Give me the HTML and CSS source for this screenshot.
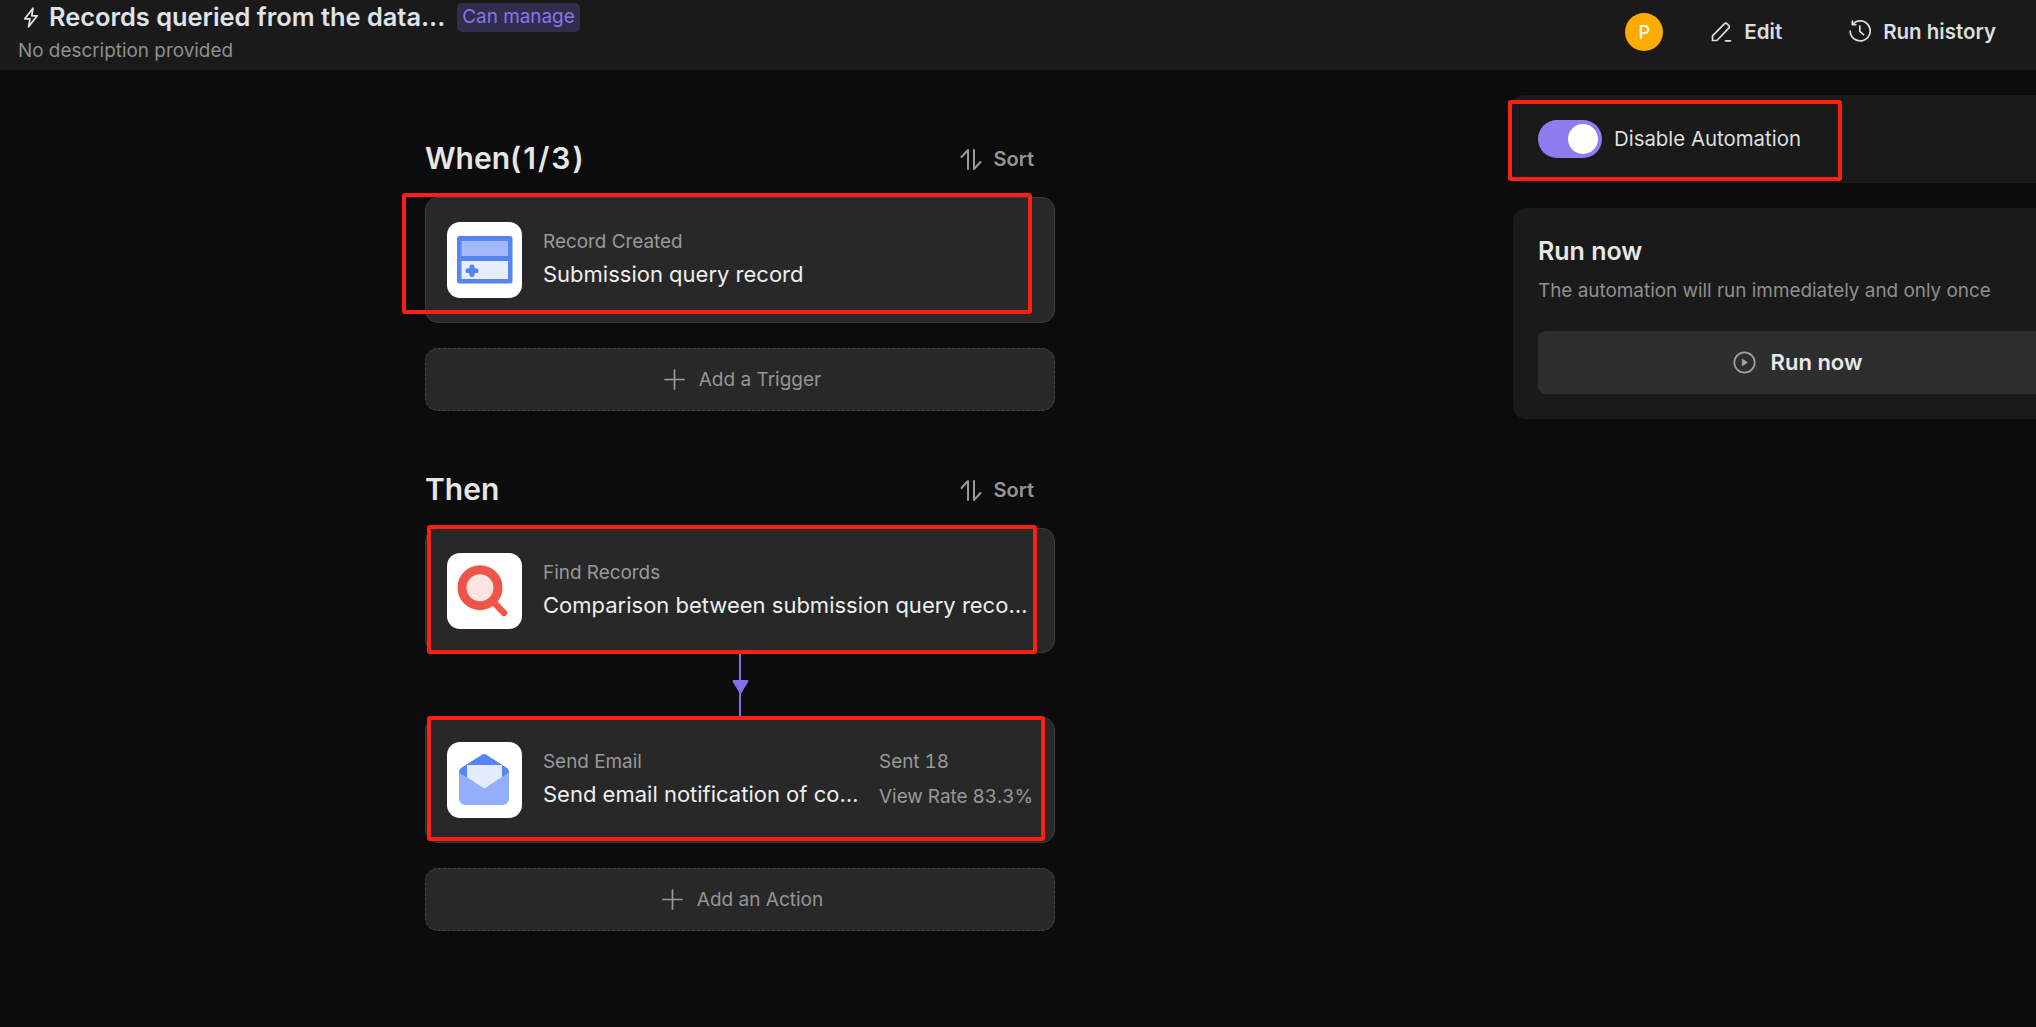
FILE: index.html
```html
<!DOCTYPE html>
<html lang="en">
<head>
<meta charset="utf-8">
<title>Automation</title>
<link rel="stylesheet" href="styles.css">
</head>
<body>
<div class="page">
  <header class="topbar">
    <div class="topbar-left">
      <div class="title-row">
        <svg class="bolt" width="16" height="21" viewBox="0 0 16 21" fill="none"><path d="M10 1.200 1.800 11.800H7L5.600 19.800 14.200 8.800H8.800Z" stroke="#e0e0e0" stroke-width="1.800" stroke-linejoin="round"/></svg>
        <h1 class="title">Records queried from the data...</h1>
        <span class="badge">Can manage</span>
      </div>
      <p class="subtitle">No description provided</p>
    </div>
    <div class="topbar-right">
      <span class="avatar">P</span>
      <a class="top-action top-action-edit">
        <svg width="21" height="21" viewBox="0 0 21 21" fill="none" stroke="#dedede" stroke-width="1.700" stroke-linecap="round" stroke-linejoin="round"><path d="M1.500 19.500v-4.600L13.600 2.600a1.600 1.600 0 0 1 2.300 0l2 2a1.600 1.600 0 0 1 0 2.300L6 19.500Z"/><path d="M14.500 19.800h5"/></svg>
        Edit
      </a>
      <a class="top-action">
        <svg width="22" height="22" viewBox="0 0 22 22" fill="none" stroke="#dedede" stroke-width="1.700" stroke-linecap="round" stroke-linejoin="round"><path d="M3.600 4.400A10 10 0 1 1 1.200 11"/><path d="M3.400 1.200v3.400h3.400"/><path d="M10.800 6v5.400l3.800 3.200"/></svg>
        Run history
      </a>
    </div>
  </header>

  <main class="main">
    <div class="flow">
      <section class="section">
        <div class="section-head">
          <h2 class="section-title">When<span class="count">(1/3)</span></h2>
          <a class="sort">
            <svg width="22" height="21" viewBox="0 0 22 21" fill="none" stroke="#9a9a9a" stroke-width="2" stroke-linecap="round" stroke-linejoin="round"><path d="M8 20V1L1.500 8"/><path d="M14 1v19l6.500-7"/></svg>
            Sort
          </a>
        </div>
        <div class="card">
          <span class="mark mark-record"></span>
          <div class="app-icon">
            <svg width="75" height="76" viewBox="0 0 75 76"><rect x="10" y="14" width="55.500" height="47.500" rx="2.500" fill="#5684f0"/><rect x="14.500" y="19" width="46.500" height="15" fill="#a3b9fb"/><rect x="14.500" y="39" width="46.500" height="18" fill="#e8eefd"/><path d="M21 48.700h8M25 45v7.500" stroke="#5684f0" stroke-width="5" stroke-linecap="round"/></svg>
          </div>
          <div class="card-text">
            <div class="card-label">Record Created</div>
            <div class="card-name">Submission query record</div>
          </div>
        </div>
        <button class="add-btn">
          <svg width="21" height="21" viewBox="0 0 21 21" stroke="#9a9a9a" stroke-width="1.700" stroke-linecap="round"><path d="M10.500 1v19M1 10.500h19"/></svg>
          Add a Trigger
        </button>
      </section>

      <section class="section section-then">
        <div class="section-head">
          <h2 class="section-title">Then</h2>
          <a class="sort">
            <svg width="22" height="21" viewBox="0 0 22 21" fill="none" stroke="#9a9a9a" stroke-width="2" stroke-linecap="round" stroke-linejoin="round"><path d="M8 20V1L1.500 8"/><path d="M14 1v19l6.500-7"/></svg>
            Sort
          </a>
        </div>
        <div class="card card-find">
          <span class="mark mark-find"></span>
          <div class="app-icon">
            <svg width="75" height="76" viewBox="0 0 75 76" fill="none"><circle cx="33" cy="34.700" r="18" fill="#fde5e3" stroke="#ee5548" stroke-width="9"/><path d="M47 49.500 57 60" stroke="#ee5548" stroke-width="6.500" stroke-linecap="round"/></svg>
          </div>
          <div class="card-text">
            <div class="card-label">Find Records</div>
            <div class="card-name">Comparison between submission query records and the database</div>
          </div>
        </div>
        <div class="connector">
          <svg class="connector-arrow" width="17" height="14" viewBox="0 0 17 14"><path d="M1.500 0h14a1 1 0 0 1 .9 1.500L9.300 13.300a1 1 0 0 1-1.600 0L.6 1.500A1 1 0 0 1 1.500 0Z" fill="#7f70ee"/></svg>
        </div>
        <div class="card">
          <span class="mark mark-email"></span>
          <div class="app-icon">
            <svg width="75" height="76" viewBox="0 0 75 76"><path d="M35 12.800a4 4 0 0 1 4.400 0L60 26a5 5 0 0 1 2 4v10H12V30a5 5 0 0 1 2-4Z" fill="#5684f0"/><path d="M20 23h35v13L37.500 46 20 36Z" fill="#e4ebfe"/><path d="M12 30.500 37.500 46.500 62 30.500V57a6 6 0 0 1-6 6H18a6 6 0 0 1-6-6Z" fill="#93aefb"/></svg>
          </div>
          <div class="card-text">
            <div class="card-label">Send Email</div>
            <div class="card-name">Send email notification of comparison results</div>
          </div>
          <div class="card-stats">
            <div class="card-label">Sent 18</div>
            <div class="card-rate">View Rate 83.3%</div>
          </div>
        </div>
        <button class="add-btn">
          <svg width="21" height="21" viewBox="0 0 21 21" stroke="#9a9a9a" stroke-width="1.700" stroke-linecap="round"><path d="M10.500 1v19M1 10.500h19"/></svg>
          Add an Action
        </button>
      </section>
    </div>

    <aside class="side">
      <div class="toggle-row">
        <span class="mark mark-toggle"></span>
        <span class="toggle"><span class="toggle-knob"></span></span>
        <span class="toggle-label">Disable Automation</span>
      </div>
      <div class="run-card">
        <h3 class="run-title">Run now</h3>
        <p class="run-desc">The automation will run immediately and only once</p>
        <button class="run-btn">
          <svg width="23" height="23" viewBox="0 0 23 23" fill="none"><circle cx="11.500" cy="11.500" r="10.200" stroke="#a0a0a0" stroke-width="1.700"/><path d="M9.300 8.200v6.600l5-3.300Z" fill="#a0a0a0" stroke="#a0a0a0" stroke-linejoin="round"/></svg>
          Run now
        </button>
      </div>
    </aside>
  </main>
</div>
</body>
</html>
```
FILE: styles.css
```css
* { box-sizing: border-box; }
html, body { margin: 0; height: 100%; overflow: hidden; }
body { background: #0c0c0c; font-family: Inter, "Liberation Sans", sans-serif; color: #e8e8e8; }
h1, h2, h3, p { margin: 0; }
.page { display: flex; flex-direction: column; height: 100vh; overflow: hidden; }

.topbar { flex: none; height: 70px; background: #1a1a1a; display: flex; justify-content: space-between; }
.topbar-left { padding: 2px 0 0 18px; }
.title-row { display: flex; align-items: center; height: 30px; }
.bolt { margin-left: 5px; flex: none; }
.title { margin-left: 10px; font-size: 25.4px; line-height: 30px; font-weight: 600; color: #dfe3ea; white-space: nowrap; }
.badge { margin-left: 12px; height: 29px; line-height: 27px; padding: 0 5px; border-radius: 5px; background: #312d4b; color: #8576f2; font-size: 18.9px; }
.subtitle { margin-top: 7px; font-size: 18.9px; line-height: 24px; color: #8f8f8f; }
.topbar-right { display: flex; align-items: center; padding: 0 40px 6px 0; }
.avatar { width: 38px; height: 38px; border-radius: 50%; background: #ffab00; color: #fff; font-size: 18px; font-weight: 500; display: flex; align-items: center; justify-content: center; }
.top-action { display: flex; align-items: center; gap: 12px; padding-bottom: 2px; font-size: 20.5px; font-weight: 600; color: #dedede; }
.top-action-edit { margin-left: 48px; }
.top-action-edit + .top-action { margin-left: 67px; }

.main { flex: 1; display: flex; padding-left: 425px; min-height: 0; }
.flow { flex: none; width: 630px; padding-top: 70px; }
.section-then { margin-top: 60px; }
.section-head { display: flex; align-items: center; justify-content: space-between; height: 36px; margin-bottom: 21px; padding-right: 21px; }
.section-title { font-size: 30px; line-height: 36px; font-weight: 600; color: #e6e6e6; }
.count { letter-spacing: 2px; }
.sort { display: flex; align-items: center; gap: 11px; margin-top: 2px; font-size: 20px; line-height: 24px; font-weight: 600; color: #959595; }

.card { position: relative; height: 126px; display: flex; align-items: center; padding: 0 21px; background: #282828; border: 1px solid #3c3c3c; border-radius: 13px; }
.card-find { height: 125px; }
.app-icon { flex: none; width: 75px; height: 76px; background: #fff; border-radius: 13px; }
.app-icon svg { display: block; }
.card-text { flex: 1; min-width: 0; margin-left: 21px; padding-bottom: 2px; }
.card-label { font-size: 18.9px; line-height: 24px; color: #999; white-space: nowrap; }
.card-name { margin-top: 6px; font-size: 22px; line-height: 28px; color: #eee; white-space: nowrap; overflow: hidden; text-overflow: ellipsis; }
.card-stats { flex: none; margin-left: 20px; padding-bottom: 2px; font-feature-settings: "tnum"; }
.card-rate { margin-top: 11px; font-size: 18.9px; line-height: 24px; color: #999; white-space: nowrap; }

.add-btn { width: 100%; height: 63px; margin-top: 25px; padding: 0 0 0 5px; display: flex; align-items: center; justify-content: center; gap: 14px; background: #282828; border: 1px dashed #454545; border-radius: 13px; color: #959595; font: 400 19px Inter, "Liberation Sans", sans-serif; }

.connector { position: relative; height: 64px; width: 2px; margin: 0 auto; background: #7f70ee; }
.connector-arrow { position: absolute; left: -7.5px; top: 27px; }

.mark { position: absolute; border: 4px solid #fb2012; border-radius: 3px; z-index: 2; pointer-events: none; }
.mark-record { left: -24px; top: -5px; width: 630px; height: 121px; }
.mark-find { left: 1px; top: -4px; width: 610px; height: 129px; }
.mark-email { left: 1px; top: -2px; width: 618px; height: 125px; }
.mark-toggle { left: -5px; top: 5px; width: 334px; height: 81px; }

.side { flex: none; width: 569px; margin-left: 458px; padding-top: 25px; }
.toggle-row { position: relative; height: 88px; background: #1a1a1a; display: flex; align-items: center; padding-left: 25px; border-radius: 10px 0 0 10px; }
.toggle { width: 64px; height: 38px; border-radius: 19px; background: #8c7df0; padding: 4px; display: flex; justify-content: flex-end; }
.toggle-knob { width: 30px; height: 30px; border-radius: 50%; background: #fff; }
.toggle-label { margin-left: 12px; padding-bottom: 1px; font-size: 20.4px; color: #dedede; }

.run-card { margin-top: 25px; height: 211px; background: #1a1a1a; border-radius: 13px; padding: 27px 25px 0; }
.run-title { font-size: 25px; line-height: 32px; font-weight: 600; color: #e8e8e8; }
.run-desc { margin-top: 11px; font-size: 18.9px; line-height: 26px; color: #8f8f8f; }
.run-btn { width: 100%; height: 63px; margin-top: 27px; padding: 0 0 1px; display: flex; align-items: center; justify-content: center; gap: 15px; background: #2e2e2e; border: 0; border-radius: 8px; color: #e8e8e8; font: 600 22px Inter, "Liberation Sans", sans-serif; }
```
